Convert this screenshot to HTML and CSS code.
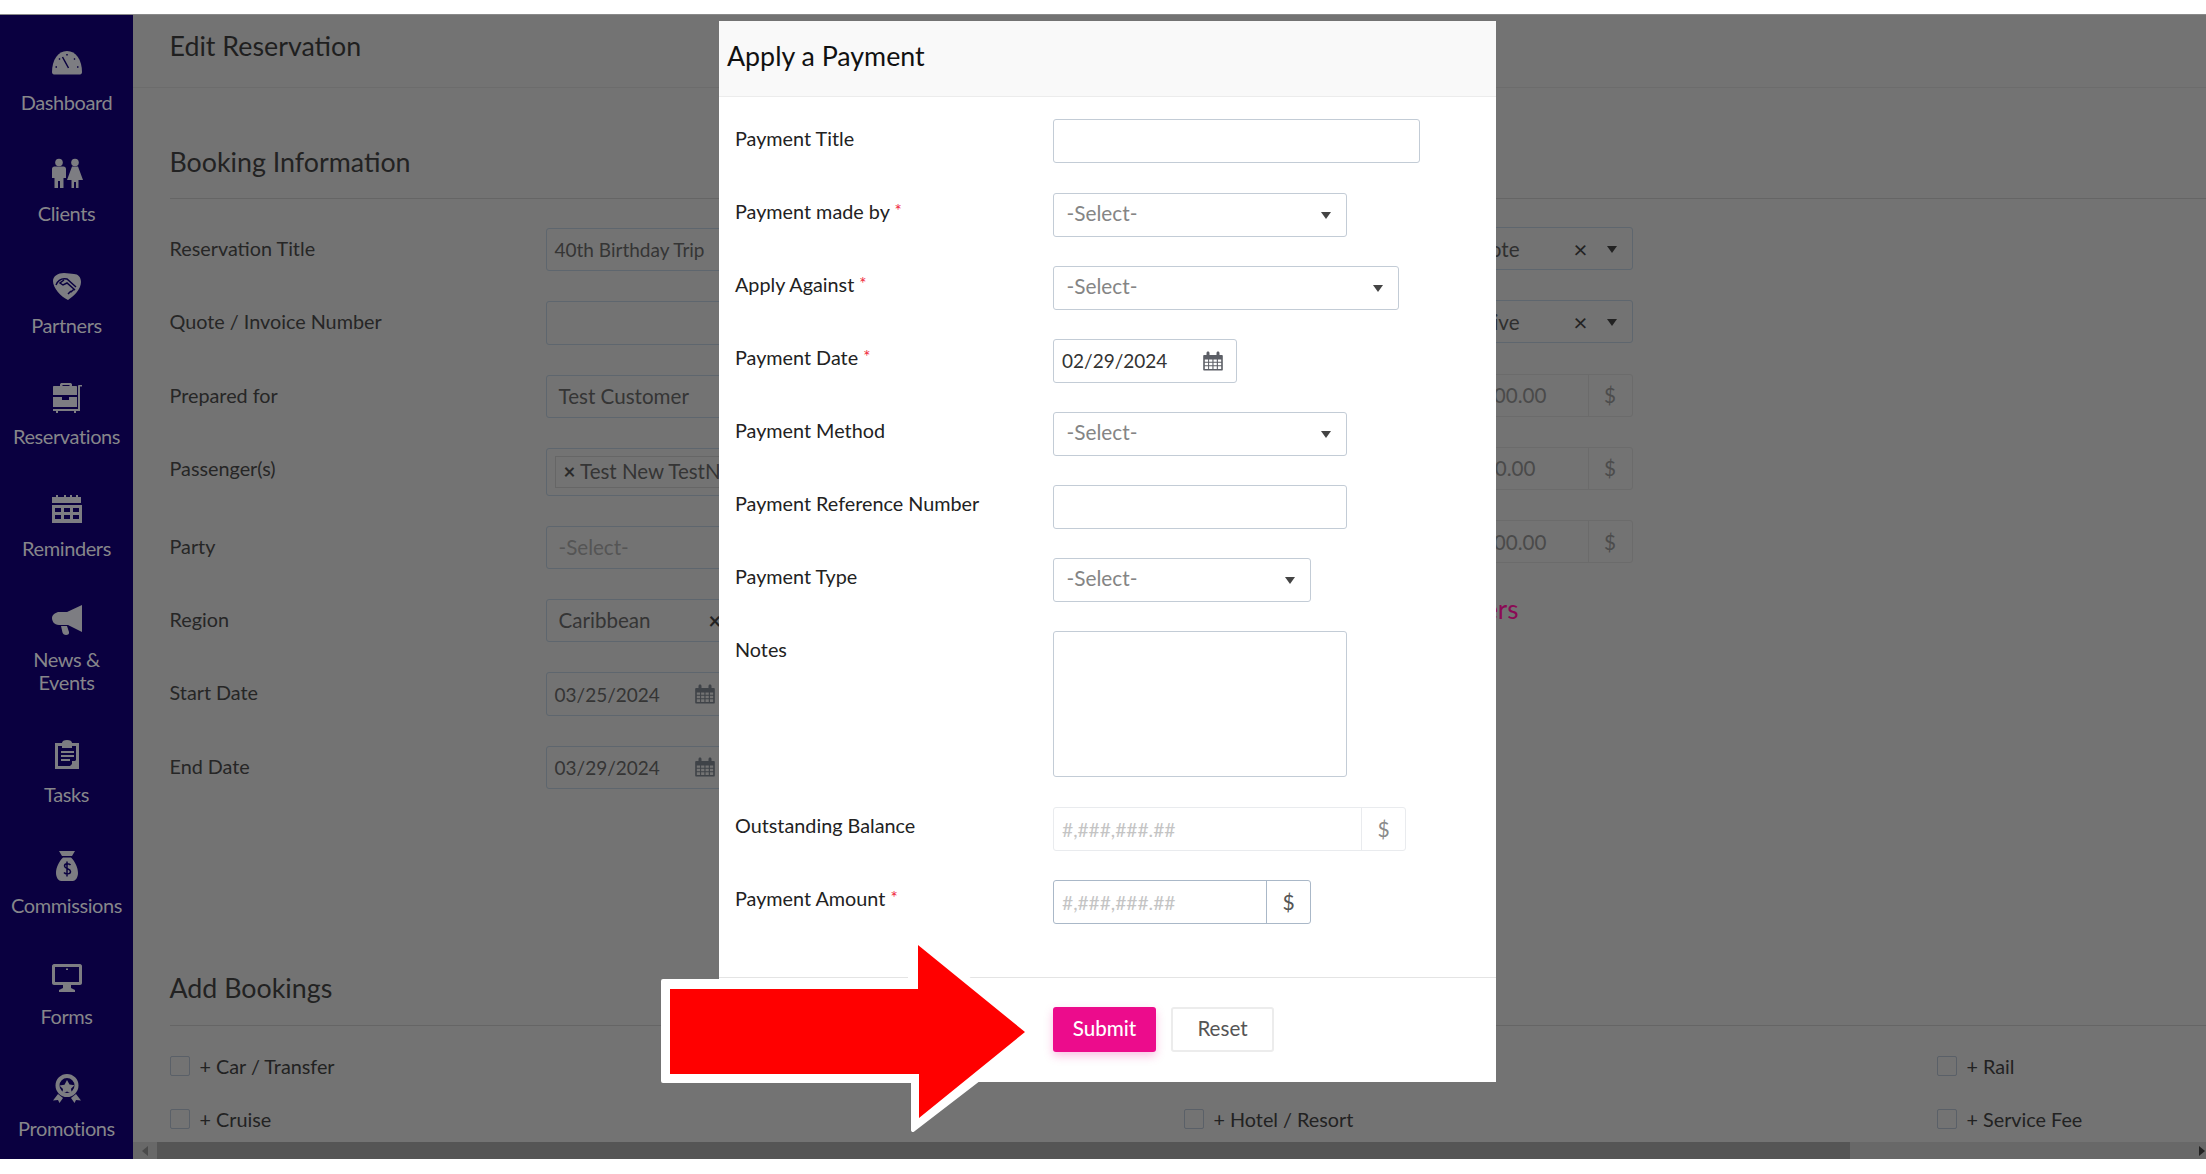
FILE: index.html
```html
<!DOCTYPE html>
<html lang="en">
<head>
<meta charset="utf-8">
<title>Edit Reservation</title>
<link rel="stylesheet" href="styles.css">
</head>
<body>
<div class="app">
  <nav class="sidebar">
    <a class="nav-item">
      <svg class="nav-icon" viewBox="0 0 32 32"><path d="M1 25C1 13 7 4 16 4s15 9 15 21c0 1.500-.8 2.500-2 2.500H3c-1.200 0-2-1-2-2.500z"/><path class="cut" d="M11.500 10l6 11M16 7v1.500M8 11.500l1 1M24 11.500l-1 1M4.500 20H6M27.500 20H26"/></svg>
      <span class="nav-label">Dashboard</span>
    </a>
    <a class="nav-item">
      <svg class="nav-icon" viewBox="0 0 32 32"><circle cx="8" cy="4.500" r="3.800"/><circle cx="24" cy="4.500" r="3.800"/><path d="M1 11c0-1.500 1-2.500 2.500-2.500h9c1.500 0 2.500 1 2.500 2.500v9h-2.500v10H9v-7H7v7H3.500V20H1z"/><path d="M21 8.500h6l5 13.500h-4.500v8H25v-6h-2v6h-2.500v-8H16z"/></svg>
      <span class="nav-label">Clients</span>
    </a>
    <a class="nav-item">
      <svg class="nav-icon" viewBox="0 0 32 32"><path d="M2 11C2 6 7 3 13 3c4 0 7 1 10 1 4 0 7 3 7 8 0 7-7 14-13 18C10 27 2 18 2 11z"/><path class="cut" d="M5 15c2-5 6-7 11-6l9 8M13 10l-4 3 3 2 4-2 8 7M20 21l-3 3M23 19l-3 3"/></svg>
      <span class="nav-label">Partners</span>
    </a>
    <a class="nav-item">
      <svg class="nav-icon" viewBox="0 0 32 32"><path d="M9 5V3.500C9 2.500 10 2 11 2h8c1 0 2 .5 2 1.500V5h4c.6 0 1 .4 1 1v8H2V6c0-.6.4-1 1-1zm2.500 0h7V4h-7z"/><path d="M2 16h9v3h7v-3h8v10H2z"/><path d="M27 4.500V28H2v2h3v2h2v-2h16v2h2v-2h4V5.500h2v-1.500h-3z" /></svg>
      <span class="nav-label">Reservations</span>
    </a>
    <a class="nav-item">
      <svg class="nav-icon" viewBox="0 0 32 32"><path d="M1 4h4V2h2v2h6V2h2v2h4V2h2v2h4V2h2v2h3v6H1z"/><path d="M1 12h30v18H1zm3 3v4h6v-4zm9 0v4h6v-4zm9 0v4h6v-4zM4 22v4h6v-4zm9 0v4h6v-4zm9 0v4h6v-4z" fill-rule="evenodd"/></svg>
      <span class="nav-label">Reminders</span>
    </a>
    <a class="nav-item">
      <svg class="nav-icon" viewBox="0 0 32 32"><path d="M31 1v27L17 21H8C3 21 1 17 1 14s3-5 6-6h9z"/><path d="M10 22h6l2 6c.5 2-1 3-3 3s-3-1-3.500-2.500z"/></svg>
      <span class="nav-label">News &amp;<br>Events</span>
    </a>
    <a class="nav-item">
      <svg class="nav-icon" viewBox="0 0 32 32"><path fill-rule="evenodd" d="M4 4h7c0-2 2-3 5-3s5 1 5 3h7v26H4zm3 3v20h12l6-6V7h-4v2H11V7z"/><path d="M10 12h13v2H10zm0 4h13v2H10zm0 4h9v2H10zm11 6v-4h4z"/></svg>
      <span class="nav-label">Tasks</span>
    </a>
    <a class="nav-item">
      <svg class="nav-icon" viewBox="0 0 32 32"><path d="M8 1h16l-3 5H11zM12 7.500h8c4 4 7 10 7 15.500 0 5-3 8-5 8H10c-2 0-5-3-5-8 0-5.500 3-11.500 7-15.500z"/><path class="cut" d="M19.500 15c-1-1.500-6-2-6 1s6 2.500 6 5.500-5 3-6.500 1M16 11.500v15"/></svg>
      <span class="nav-label">Commissions</span>
    </a>
    <a class="nav-item">
      <svg class="nav-icon" viewBox="0 0 32 32"><path fill-rule="evenodd" d="M3 3h26c1 0 2 1 2 2v17c0 1-1 2-2 2H3c-1 0-2-1-2-2V5c0-1 1-2 2-2zm1 3v15h24V6z"/><path d="M12 24h8v3l4 2v2H8v-2l4-2zM15 7.500h2v1.500h-2z"/></svg>
      <span class="nav-label">Forms</span>
    </a>
    <a class="nav-item">
      <svg class="nav-icon" viewBox="0 0 32 32"><path fill-rule="evenodd" d="M16 1a11.500 11.500 0 1 1 0 23 11.500 11.500 0 0 1 0-23zm0 4a7.500 7.500 0 1 0 0 15 7.500 7.500 0 0 0 0-15z"/><path d="M16 7l2.500 4.500 5 .800-3.500 3.500.800 5L16 18.500 11.200 21l.800-5-3.500-3.500 5-.800zM7 21l5 4-3.500 5-1.500-3-5 .500zM25 21l-5 4 3.500 5 1.500-3 5 .500z"/></svg>
      <span class="nav-label">Promotions</span>
    </a>
  </nav>

  <main class="main">
    <div class="content">
      <header class="page-head"><h1 class="page-title">Edit Reservation</h1></header>
      <section class="section">
        <h2 class="section-title">Booking Information</h2>
        <div class="form-cols">
          <div class="col-left">
            <div class="b-row"><span class="b-label">Reservation Title</span><div class="b-field">40th Birthday Trip</div></div>
            <div class="b-row"><span class="b-label">Quote / Invoice Number</span><div class="b-field"></div></div>
            <div class="b-row"><span class="b-label">Prepared for</span><div class="b-field b-sel">Test Customer</div></div>
            <div class="b-row b-row-tall"><span class="b-label">Passenger(s)</span><div class="b-field b-tags"><span class="b-tag"><span class="b-tag-x">×</span> Test New TestName</span></div></div>
            <div class="b-row b-row-party"><span class="b-label">Party</span><div class="b-field b-sel b-muted">-Select-</div></div>
            <div class="b-row"><span class="b-label">Region</span><div class="b-field b-sel">Caribbean<span class="b-clear">×</span></div></div>
            <div class="b-row"><span class="b-label">Start Date</span><div class="b-field">03/25/2024
              <svg class="cal cal-dim" viewBox="0 0 20 20"><use href="#cal"/></svg></div></div>
            <div class="b-row"><span class="b-label">End Date</span><div class="b-field">03/29/2024
              <svg class="cal cal-dim" viewBox="0 0 20 20"><use href="#cal"/></svg></div></div>
          </div>
          <div class="col-right">
            <div class="r-field"><span class="r-val">Quote</span><span class="r-x">×</span><i class="caret caret-dark"></i></div>
            <div class="r-field"><span class="r-val">Active</span><span class="r-x">×</span><i class="caret caret-dark"></i></div>
            <div class="r-money r-money-a"><span class="r-amt">1,000.00</span><span class="r-add">$</span></div>
            <div class="r-money r-money-b"><span class="r-amt">100.00</span><span class="r-add">$</span></div>
            <div class="r-money r-money-a"><span class="r-amt">1,000.00</span><span class="r-add">$</span></div>
            <a class="r-link">Travelers</a>
          </div>
        </div>
      </section>
      <section class="section-add">
        <h2 class="section-title section-title-add">Add Bookings</h2>
        <div class="add-grid">
          <label class="chk"><i class="box"></i>+ Car / Transfer</label>
          <span></span>
          <label class="chk"><i class="box"></i>+ Rail</label>
          <label class="chk"><i class="box"></i>+ Cruise</label>
          <label class="chk"><i class="box"></i>+ Hotel / Resort</label>
          <label class="chk"><i class="box"></i>+ Service Fee</label>
        </div>
      </section>
    </div>
    <div class="scrollbar">
      <i class="sb-left"></i>
      <div class="sb-thumb"></div>
      <i class="sb-right"></i>
    </div>
  </main>
</div>

<div class="modal">
  <div class="m-head">Apply a Payment</div>
  <form class="m-body">
    <div class="m-row m-row-first"><label class="m-label">Payment Title</label><input class="m-input w-367" type="text"></div>
    <div class="m-row"><label class="m-label">Payment made by <b class="req">*</b></label><div class="m-input m-select w-294">-Select-<i class="caret"></i></div></div>
    <div class="m-row"><label class="m-label">Apply Against <b class="req">*</b></label><div class="m-input m-select w-346">-Select-<i class="caret"></i></div></div>
    <div class="m-row"><label class="m-label">Payment Date <b class="req">*</b></label><div class="m-input m-date w-184">02/29/2024
      <svg class="cal" viewBox="0 0 20 20"><use href="#cal"/></svg></div></div>
    <div class="m-row"><label class="m-label">Payment Method</label><div class="m-input m-select w-294">-Select-<i class="caret"></i></div></div>
    <div class="m-row"><label class="m-label">Payment Reference Number</label><input class="m-input w-294" type="text"></div>
    <div class="m-row"><label class="m-label">Payment Type</label><div class="m-input m-select w-258">-Select-<i class="caret"></i></div></div>
    <div class="m-row m-row-notes"><label class="m-label">Notes</label><textarea class="m-input m-area w-294"></textarea></div>
    <div class="m-row"><label class="m-label">Outstanding Balance</label><div class="m-group m-group-off w-353"><input class="m-group-in" type="text" placeholder="#,###,###.##" disabled><span class="m-add">$</span></div></div>
    <div class="m-row"><label class="m-label">Payment Amount <b class="req">*</b></label><div class="m-group w-258"><input class="m-group-in" type="text" placeholder="#,###,###.##"><span class="m-add">$</span></div></div>
  </form>
  <div class="m-foot">
    <button class="btn btn-submit" type="button">Submit</button>
    <button class="btn btn-reset" type="button">Reset</button>
  </div>
</div>

<svg class="arrow" viewBox="0 0 400 210" width="400" height="210">
  <polygon class="arrow-out" points="13,51 260,51 260,2 385,102 328,150 263,200 263,151 13,151"/>
  <polygon class="arrow-in" points="20,59 268,59 268,15 375,102 269,188 269,144 20,144"/>
</svg>

<svg class="defs" width="0" height="0">
  <symbol id="cal" viewBox="0 0 20 20">
    <path fill="currentColor" fill-rule="evenodd" d="M1 4h2.500V2.500C3.500 1 4 .5 5 .5s1.500.5 1.500 2V4h7V2.500c0-1.500.5-2 1.500-2s1.500.5 1.500 2V4H19c.5 0 .8.400.8 1v13.500c0 .6-.4 1-.8 1H1c-.5 0-.8-.4-.8-1V5c0-.6.3-1 .8-1zm.8 4.500v2.300h3.300V8.500zm4.300 0v2.300h3.300V8.500zm4.400 0v2.300h3.300V8.500zm4.400 0v2.300h3.300V8.500zM1.800 11.800v2.500h3.300v-2.500zm4.300 0v2.500h3.300v-2.500zm4.400 0v2.500h3.300v-2.500zm4.400 0v2.500h3.300v-2.500zM1.800 15.300v2.700h3.300v-2.700zm4.300 0v2.700h3.300v-2.700zm4.400 0v2.700h3.300v-2.700zm4.400 0v2.700h3.300v-2.700z"/>
  </symbol>
</svg>
</body>
</html>
```
FILE: styles.css
```css
* { box-sizing: border-box; }
html, body { margin: 0; height: 100%; }
body {
  position: relative;
  height: 1174px;
  overflow: hidden;
  background: #fff;
  font-family: Lato, "Open Sans", sans-serif;
  font-size: 19.800px;
  color: #222;
}

.app {
  display: flex;
  margin-top: 14px;
  height: 1145px;
  border-top: 1px solid #8a8a8a;
}

/* sidebar */
.sidebar {
  flex: 0 0 133px;
  display: flex;
  flex-direction: column;
  align-items: center;
  padding-top: 32px;
  background: #0a0040;
}
.nav-item {
  display: flex;
  flex: none;
  flex-direction: column;
  align-items: center;
  width: 100%;
  margin-bottom: 44.100px;
  color: #86868a;
  text-align: center;
}
.nav-icon { width: 32px; height: 32px; fill: #7d7d82; display: block; }
.nav-icon .cut { fill: none; stroke: #0a0040; stroke-width: 1.500; }
.nav-label {
  margin-top: 12px;
  font-size: 20px;
  line-height: 23.300px;
  letter-spacing: -.4px;
}

/* main area */
.main {
  flex: 1;
  min-width: 0;
  display: flex;
  flex-direction: column;
  background: #737373;
}
.content { flex: 1; min-height: 0; overflow: hidden; }
.page-head {
  height: 73px;
  padding: 13px 36.500px 0;
  border-bottom: 1px solid #6c6c6c;
}
.page-title { margin: 0; font-size: 26.800px; font-weight: 400; line-height: 36px; color: #1f1f1f; }
.section { padding: 0 0 0 36.500px; }
.section-title {
  margin: 0;
  height: 111px;
  padding-top: 56px;
  font-size: 26.800px;
  font-weight: 400;
  line-height: 36px;
  color: #222;
  border-bottom: 1px solid #656565;
}
.form-cols { display: flex; margin-top: 29px; height: 726px; }
.col-left { flex: 0 0 826.500px; }
.b-row { display: flex; height: 43.300px; margin-bottom: 30px; }
.b-row-tall { height: 48px; }
.b-label { flex: 0 0 376px; padding-top: 8px; line-height: 24px; color: #262626; font-size: 19.800px; }
.b-field {
  flex: 0 0 450px;
  display: flex;
  align-items: center;
  padding: 0 8px;
  border: 1px solid #5e666e;
  border-radius: 3px;
  font-size: 19px;
  color: #353535;
}
.b-sel { padding-left: 12px; padding-bottom: 1px; font-size: 20.600px; }
.b-muted { color: #555; }
.b-clear { margin-left: 58px; font-weight: 700; font-size: 22px; color: #222; }
.b-tags { padding: 0 8px; }
.b-tag {
  padding: 2px 8px 4px;
  border: 1px solid #666;
  font-size: 20.500px;
  white-space: nowrap;
}
.b-tag-x { font-weight: 700; color: #2a2a2a; }
.cal { width: 20px; height: 20px; flex: none; color: #5c5f66; margin-left: auto; }
.cal-dim { color: #3f4348; margin-left: 35px; }

.col-right { flex: 0 0 436px; margin-left: 200.500px; margin-top: -1px; }
.r-field, .r-money {
  display: flex;
  align-items: center;
  justify-content: flex-end;
  height: 43px;
  margin-bottom: 30.300px;
  border-radius: 3px;
  font-size: 20.600px;
}
.r-field { border: 1px solid #5e666e; padding: 1px 15px 0 0; color: #2f2f2f; }
.r-val { margin-right: 54px; }
.r-x { font-size: 24px; line-height: 1; color: #222; margin-right: 19px; }
.r-money { border: 1px solid #6b6b6b; color: #4a4a4a; }
.r-money-a .r-amt { margin-right: 41px; }
.r-money-b .r-amt { margin-right: 52px; }
.r-add {
  flex: 0 0 44px;
  align-self: stretch;
  display: flex;
  align-items: center;
  justify-content: center;
  border-left: 1px solid #6b6b6b;
  color: #4c4c4c;
}
.r-link {
  display: block;
  margin-top: 28px;
  padding-right: 114px;
  text-align: right;
  font-size: 26px;
  color: #8a0a55;
}
.caret {
  display: block;
  width: 0;
  height: 0;
  border-left: 5.500px solid transparent;
  border-right: 5.500px solid transparent;
  border-top: 7px solid #444;
}
.caret-dark { border-top-color: #222; }

.section-add { padding-left: 36.500px; }
.section-title-add { height: 72px; padding-top: 16px; }
.add-grid {
  display: grid;
  grid-template-columns: 1014px 753px 1fr;
  grid-auto-rows: 53px;
  padding-top: 30px;
}
.chk { display: flex; align-items: flex-start; font-size: 19.800px; line-height: 20px; color: #222; }
.box {
  width: 20px;
  height: 20px;
  margin-right: 10px;
  border: 1px solid #5a6068;
  border-radius: 2px;
}

.scrollbar {
  flex: 0 0 17px;
  position: relative;
  display: flex;
  align-items: center;
  background: #686868;
}
.sb-thumb { width: 1693px; height: 100%; margin-left: 24px; background: #555; }
.sb-left, .sb-right { position: absolute; width: 0; height: 0; border-top: 5px solid transparent; border-bottom: 5px solid transparent; }
.sb-left { left: 9px; border-right: 6px solid #4a4a4a; }
.sb-right { right: 1px; border-left: 6px solid #222; }

/* modal */
.modal {
  position: absolute;
  left: 719px;
  top: 21px;
  width: 777px;
  height: 1061px;
  display: flex;
  flex-direction: column;
  background: #fff;
}
.m-head {
  flex: 0 0 76px;
  padding: 20px 8px 0;
  background: #f9f9f9;
  border-bottom: 1px solid #ececec;
  font-size: 26.800px;
  line-height: 30px;
  color: #111;
}
.m-body { flex: 1; padding: 22px 0 0 16px; }
.m-row { display: flex; height: 73px; }
.m-row-first { height: 74px; }
.m-row-notes { height: 176px; }
.m-label { flex: 0 0 318px; padding-top: 6px; line-height: 24px; font-size: 19.800px; color: #222; }
.m-row-first .m-label { padding-top: 7px; }
.req { color: #f01f3c; font-weight: 400; font-size: 17px; vertical-align: 2px; }
.m-input {
  height: 44px;
  border: 1px solid #c3ccd6;
  border-radius: 3px;
  background: #fff;
  font-family: inherit;
  outline: none;
}
.m-select {
  display: flex;
  align-items: center;
  justify-content: space-between;
  padding: 0 15px 5px 12.500px;
  font-size: 20.800px;
  color: #858585;
}
.m-select .caret { margin-top: 5px; }
.m-date {
  display: flex;
  align-items: center;
  padding: 0 13px 2px 8px;
  font-size: 19px;
  color: #333;
}
.m-date .cal { margin-top: 2px; }
.m-area { height: 146px; resize: none; display: block; }
.w-367 { width: 367px; }
.w-353 { width: 353px; }
.w-346 { width: 346px; }
.w-294 { width: 294px; }
.w-258 { width: 258px; }
.w-184 { width: 184px; }
.m-group {
  display: flex;
  height: 44px;
  border: 1px solid #aab8c8;
  border-radius: 3px;
}
.m-group-off { border-color: #e9ebee; }
.m-group-in {
  flex: 1;
  min-width: 0;
  padding: 0 8px;
  border: 0;
  background: none;
  font-family: inherit;
  font-size: 19.200px;
  outline: none;
}
.m-group-in::placeholder { color: #c4c4c4; opacity: 1; }
.m-add {
  flex: 0 0 44px;
  display: flex;
  align-items: center;
  justify-content: center;
  border-left: 1px solid #aab8c8;
  padding-bottom: 2px;
  font-size: 21px;
  color: #555;
}
.m-group-off .m-add { border-left-color: #e9ebee; color: #8a8a8a; }
.m-foot {
  flex: 0 0 105px;
  display: flex;
  gap: 15px;
  padding: 29px 0 0 334px;
  border-top: 1px solid #e4e4e4;
}
.btn {
  width: 103px;
  height: 45px;
  padding: 0 0 3px;
  border-radius: 3px;
  font-family: inherit;
  font-size: 20.600px;
}
.btn-submit {
  border: 0;
  background: #ec0c8c;
  color: #fff;
  font-weight: 500;
  box-shadow: 0 4px 10px rgba(236, 12, 140, .25);
}
.btn-reset { border: 2px solid #ececec; background: #fff; color: #555; }

/* annotation arrow over the screenshot */
.arrow { position: absolute; left: 650px; top: 930px; }
.arrow-out { fill: #fff; stroke: #fff; stroke-width: 4; stroke-linejoin: round; }
.arrow-in { fill: #ff0000; }
.defs { position: absolute; }
```
